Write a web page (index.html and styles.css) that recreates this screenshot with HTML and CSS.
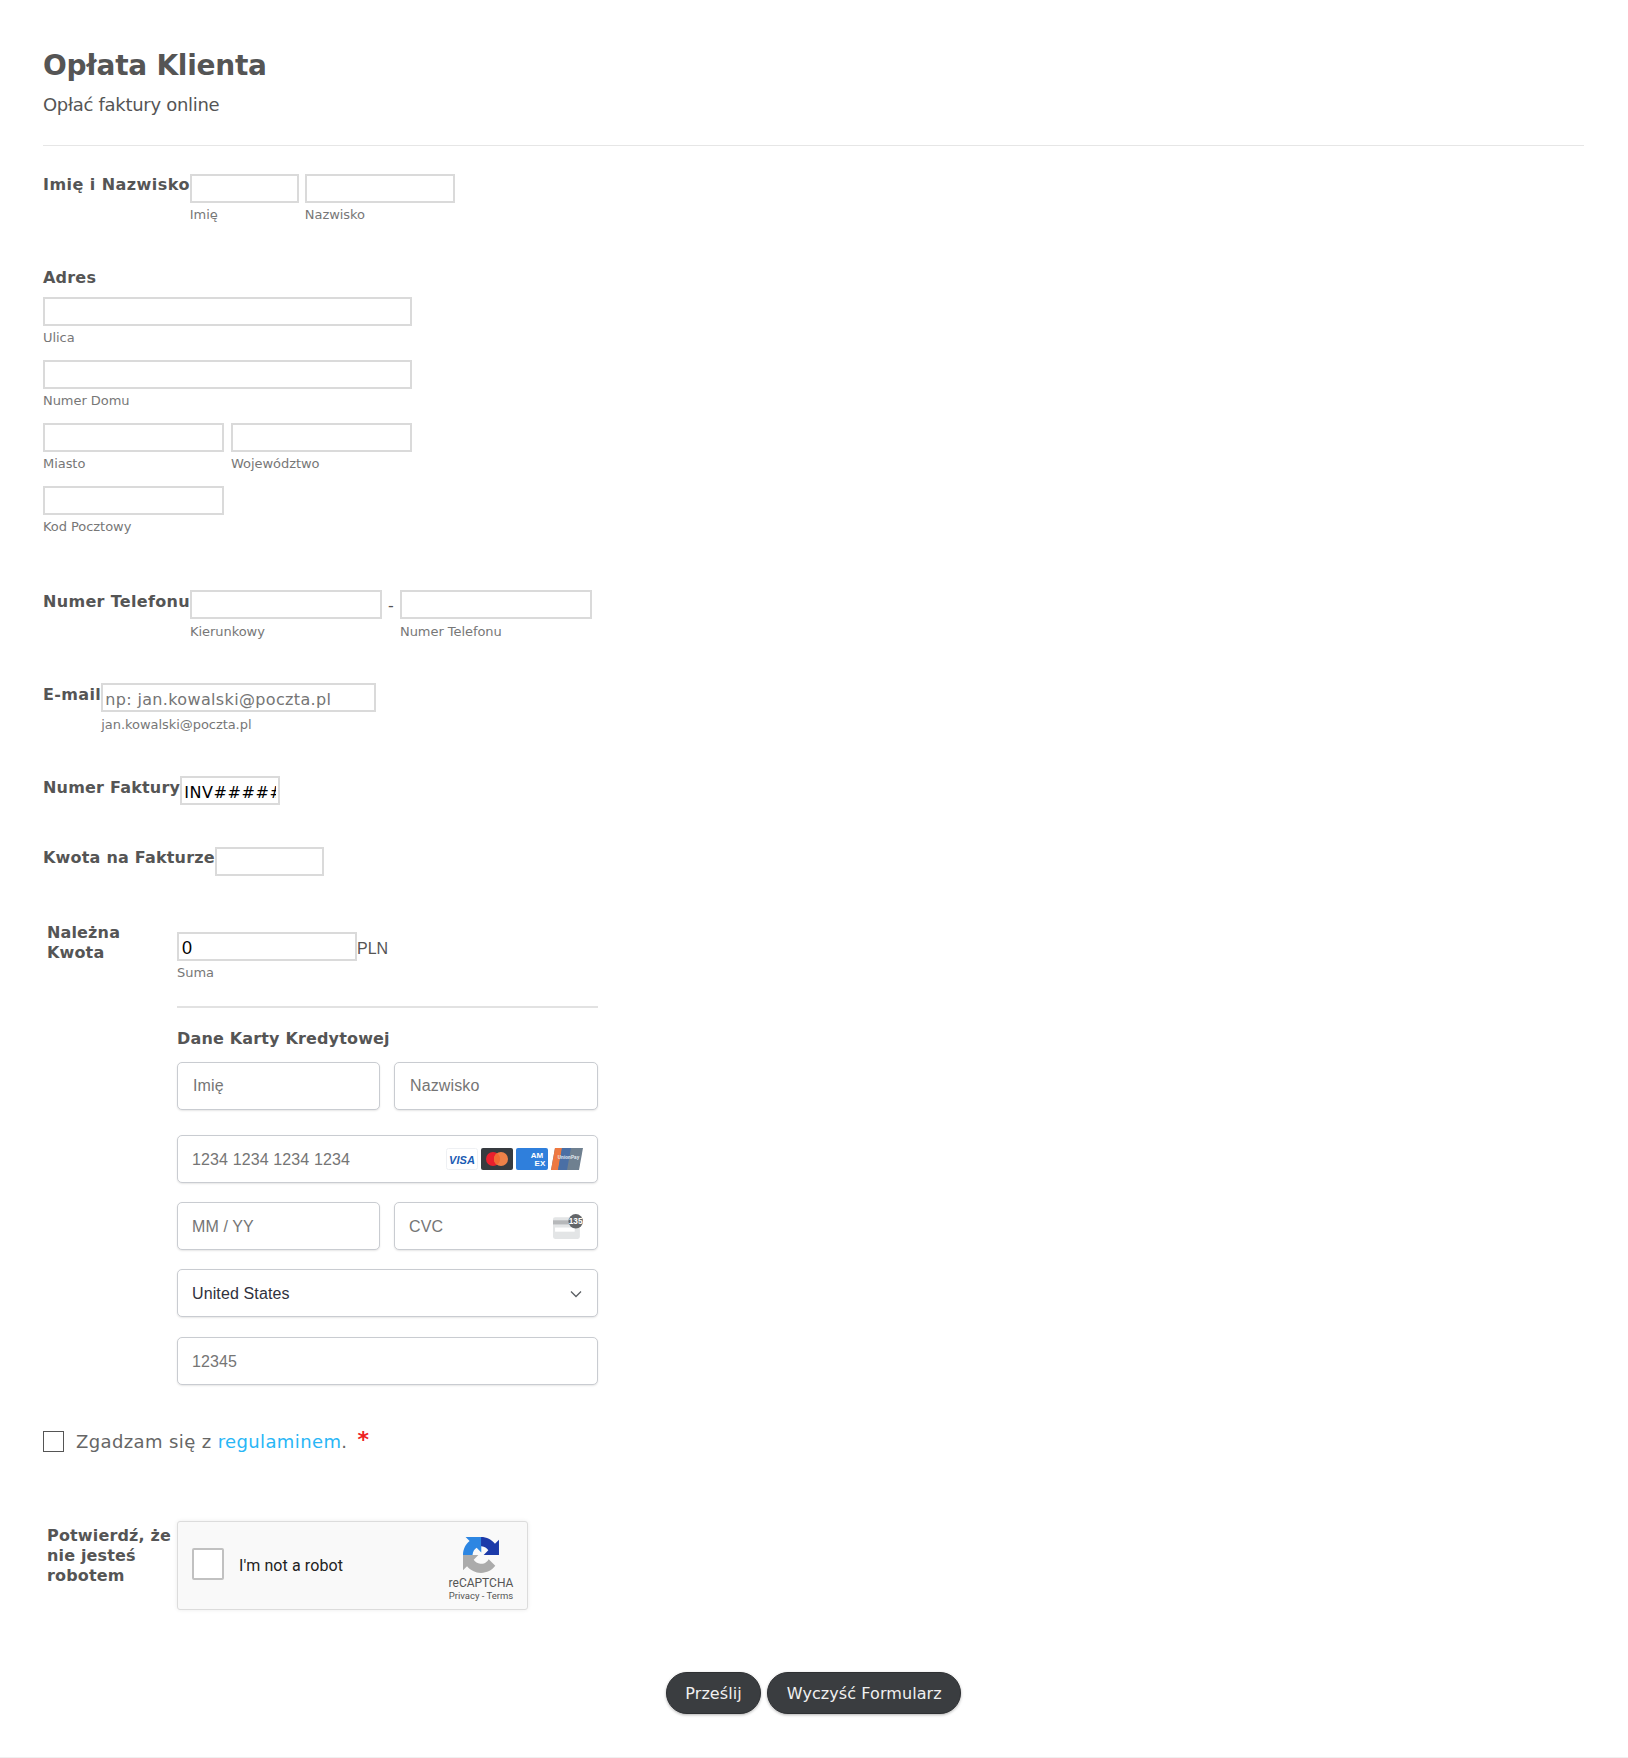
FILE: index.html
```html
<!DOCTYPE html>
<html lang="pl">
<head>
<meta charset="utf-8">
<title>Opłata Klienta</title>
<link rel="stylesheet" href="styles.css">
</head>
<body>
<form class="form">
  <header class="head">
    <h1 class="title">Opłata Klienta</h1>
    <p class="subtitle">Opłać faktury online</p>
  </header>

  <div class="field field-name">
    <span class="label">Imię i Nazwisko</span>
    <div class="inputs gap-6">
      <div class="sub"><input class="box w109" type="text"><span class="hint">Imię</span></div>
      <div class="sub"><input class="box w150" type="text"><span class="hint">Nazwisko</span></div>
    </div>
  </div>

  <div class="field-stack">
    <span class="label label-top">Adres</span>
    <div class="sub"><input class="box w369" type="text"><span class="hint">Ulica</span></div>
    <div class="sub mt14"><input class="box w369" type="text"><span class="hint">Numer Domu</span></div>
    <div class="inputs gap-7 mt14">
      <div class="sub"><input class="box w181" type="text"><span class="hint">Miasto</span></div>
      <div class="sub"><input class="box w181" type="text"><span class="hint">Województwo</span></div>
    </div>
    <div class="sub mt14"><input class="box w181" type="text"><span class="hint">Kod Pocztowy</span></div>
  </div>

  <div class="field field-phone">
    <span class="label">Numer Telefonu</span>
    <div class="inputs">
      <div class="sub"><input class="box w192" type="text"><span class="hint hint-low">Kierunkowy</span></div>
      <span class="dash">-</span>
      <div class="sub"><input class="box w192" type="text"><span class="hint hint-low">Numer Telefonu</span></div>
    </div>
  </div>

  <div class="field field-mail">
    <span class="label">E-mail</span>
    <div class="sub"><input class="box w275 spaced" type="text" placeholder="np: jan.kowalski@poczta.pl"><span class="hint hint-low">jan.kowalski@poczta.pl</span></div>
  </div>

  <div class="field field-invoice">
    <span class="label">Numer Faktury</span>
    <input class="box w100 pad-low" type="text" value="INV########">
  </div>

  <div class="field field-amount">
    <span class="label">Kwota na Fakturze</span>
    <input class="box w109" type="text">
  </div>

  <div class="field field-pay">
    <span class="label label-side">Należna Kwota</span>
    <div class="pay">
      <div class="total">
        <input class="box w180 arial" type="text" value="0"><span class="currency">PLN</span>
      </div>
      <span class="hint">Suma</span>
      <hr class="rule">
      <div class="card-title">Dane Karty Kredytowej</div>
      <div class="s-row s-row-first">
        <div class="s-box">Imię</div>
        <div class="s-box">Nazwisko</div>
      </div>
      <div class="s-box s-card">
        <span class="s-text">1234 1234 1234 1234</span>
        <span class="brands">
          <svg class="brand" viewBox="0 0 32 22"><rect x=".5" y=".5" width="31" height="21" rx="2" fill="#fff" stroke="#eef0f3"/><text class="visa" x="16" y="15.5" text-anchor="middle">VISA</text></svg>
          <svg class="brand" viewBox="0 0 32 22"><rect width="32" height="22" rx="2" fill="#363b40"/><circle cx="12" cy="11" r="7" fill="#ea1f2d"/><circle cx="20" cy="11" r="7" fill="#ee8148"/><path d="M16 5.2a7 7 0 0 1 0 11.6 7 7 0 0 1 0-11.6z" fill="#f26a33"/></svg>
          <svg class="brand" viewBox="0 0 32 22"><rect width="32" height="22" rx="2" fill="#2f7fdc"/><text class="amex" x="21" y="9.5" text-anchor="middle">AM</text><text class="amex" x="24" y="18" text-anchor="middle">EX</text></svg>
          <svg class="brand" viewBox="0 0 32 22"><path d="M4 0h28l-4 22H0z" fill="#6f8090"/><path d="M4 0h7L7 22H0z" fill="#ee7840"/><path d="M11 0h9l-4 22H7z" fill="#4a6fa5"/><text class="union" x="17.5" y="11" text-anchor="middle">UnionPay</text></svg>
        </span>
      </div>
      <div class="s-row">
        <div class="s-box"><span class="s-text">MM / YY</span></div>
        <div class="s-box s-card">
          <span class="s-text">CVC</span>
          <svg class="cvc" viewBox="0 0 30 24"><rect y="3" width="26" height="21" rx="2" fill="#e3e5e6"/><rect y="6" width="26" height="4" fill="#b6b8ba"/><rect x="2" y="13" width="19" height="4" fill="#fff"/><circle cx="22" cy="7" r="7" fill="#636669"/><text class="cvc-num" x="22" y="9.8" text-anchor="middle">135</text></svg>
        </div>
      </div>
      <div class="s-box s-card s-country">
        <span class="s-text s-value">United States</span>
        <svg class="chev" viewBox="0 0 12 8"><path d="M1 1.5l5 5 5-5" fill="none" stroke="#5b5f63" stroke-width="1.3"/></svg>
      </div>
      <div class="s-box"><span class="s-text">12345</span></div>
    </div>
  </div>

  <div class="terms">
    <span class="check"></span>
    <span class="terms-text">Zgadzam się z <a class="link" href="#">regulaminem</a>.</span>
    <span class="star">*</span>
  </div>

  <div class="field field-captcha">
    <span class="label label-side label-cap">Potwierdź, że nie jesteś robotem</span>
    <div class="captcha">
      <span class="cap-box"></span>
      <span class="cap-text">I'm not a robot</span>
      <div class="cap-brand">
        <svg class="cap-logo" viewBox="0 0 64 64">
          <path fill="#ababab" d="M.001 32.045l.033 1.37v25.898l7.16-7.16c5.86 7.173 14.774 11.754 24.76 11.754 10.4 0 19.622-4.96 25.458-12.64L45.676 39.407a15.55 15.55 0 0 1-4.754 5.334c-2.05 1.6-4.952 2.906-8.968 2.906-.485 0-.86-.057-1.135-.163-4.976-.393-9.288-3.14-11.828-7.124l8.307-8.307-26.3-.004"/>
          <path fill="#2d86e2" d="M31.862.094l-1.37.033H4.594l7.16 7.16C4.58 13.147 0 22.06 0 32.046h16.923c0-.485.057-.86.163-1.135.393-4.976 3.14-9.288 7.124-11.828l8.307 8.307.004-26.3"/>
          <path fill="#1c3aa9" d="M64 31.955l-.033-1.37V4.687l-7.16 7.16C50.948 4.674 42.033.093 32.05.093v16.165c.485 0 .86.057 1.135.163 4.976.393 9.288 3.14 11.828 7.124l-8.307 8.307 26.3.004"/>
        </svg>
        <span class="cap-name">reCAPTCHA</span>
        <span class="cap-links">Privacy - Terms</span>
      </div>
    </div>
  </div>

  <div class="actions">
    <button class="btn" type="button">Prześlij</button>
    <button class="btn" type="button">Wyczyść Formularz</button>
  </div>
</form>
</body>
</html>
```
FILE: styles.css
```css
* { box-sizing: border-box; }
html, body { margin: 0; padding: 0; background: #fff; }
body { height: 1758px; overflow: hidden; }
.form {
  font-family: "DejaVu Sans", sans-serif;
  color: #555;
  padding: 0 44px 0 43px;
  height: 1758px;
  border-bottom: 1px solid #f0f0f0;
}
.head { padding-top: 48px; height: 146px; border-bottom: 1px solid #e6e6e6; }
.title { margin: 0; font-size: 28px; line-height: 36px; font-weight: 700; letter-spacing: -.25px; color: #555; }
.subtitle { margin: 9px 0 0; font-size: 18px; line-height: 24px; letter-spacing: -.3px; color: #555; }

.field { display: flex; align-items: flex-start; }
.inputs { display: flex; align-items: flex-start; }
.gap-6 { gap: 6px; }
.gap-7 { gap: 7px; }
.mt14 { margin-top: 14px; }
.sub { display: flex; flex-direction: column; align-items: flex-start; }
.label { padding-top: 1px; font-size: 16px; line-height: 20px; font-weight: 700; letter-spacing: .3px; color: #555; white-space: nowrap; }
.label-top { display: block; margin-bottom: 9px; letter-spacing: .2px; }
.label-side { white-space: normal; width: 134px; padding-left: 4px; flex: none; letter-spacing: .15px; }

.box {
  display: block;
  height: 29px;
  margin: 0;
  padding: 2px 3px;
  border: 2px solid #dadada;
  border-radius: 0;
  background: #fff;
  font-family: "DejaVu Sans", sans-serif;
  font-size: 16px;
  color: #000;
  outline: none;
}
.box::placeholder { color: #757575; opacity: 1; }
.spaced { padding: 4px 3px 0 2px; letter-spacing: .35px; }
.pad-low { padding: 4px 2px 0; letter-spacing: .6px; }
.w100 { width: 100px; }
.w109 { width: 109px; }
.w150 { width: 150px; }
.w180 { width: 180px; }
.w181 { width: 181px; }
.w192 { width: 192px; }
.w275 { width: 275px; }
.w369 { width: 369px; }
.arial { padding: 4px 3px 0 3px; font-family: "Liberation Sans", sans-serif; font-size: 18px; }
.hint { display: block; margin-top: 4px; font-size: 13px; line-height: 16px; letter-spacing: -.05px; color: #777; white-space: nowrap; }
.hint-low { margin-top: 5px; line-height: 15px; }
.dash { width: 18px; text-align: center; font-size: 16px; line-height: 31px; color: #555; }

.field-name { margin-top: 28px; }
.field-name .label { letter-spacing: .45px; }
.field-stack { margin-top: 44px; }
.field-phone { margin-top: 55px; }
.field-phone .label { padding-top: 2px; letter-spacing: .32px; }
.field-mail { margin-top: 44px; }
.field-mail .label { padding-top: 2px; letter-spacing: .37px; }
.field-invoice { margin-top: 44px; }
.field-invoice .label { padding-top: 2px; letter-spacing: .2px; }
.field-amount { margin-top: 42px; }
.field-amount .label { letter-spacing: .2px; }
.field-pay { margin-top: 46px; }
.field-captcha { margin-top: 69px; }

.pay { width: 421px; padding-top: 10px; }
.total { display: flex; align-items: center; }
.currency { padding-top: 4px; font-family: "Liberation Sans", sans-serif; font-size: 16px; color: #555; }
.rule { height: 2px; margin: 25px 0 0; border: 0; background: #e2e2e2; }
.card-title { margin: 21px 0 13px; font-size: 16px; line-height: 20px; font-weight: 700; letter-spacing: .16px; color: #555; }

.s-row { display: grid; grid-template-columns: 203px 204px; gap: 14px; margin-bottom: 19px; }
.s-row-first { margin-bottom: 25px; }
.s-box {
  height: 48px;
  padding: 0 14px;
  display: flex;
  align-items: center;
  border: 1px solid #c9ccd1;
  border-radius: 5px;
  background: #fff;
  box-shadow: 0 1px 2px rgba(0, 0, 0, .1);
  font-family: "Liberation Sans", sans-serif;
  font-size: 16px;
  letter-spacing: .12px;
  color: #757575;
}
.s-row-first .s-box { padding-left: 15px; }
.s-text { padding-top: 2px; }
.s-card { justify-content: space-between; }
.pay > .s-card { margin-bottom: 19px; }
.pay > .s-country { margin-bottom: 20px; }
.s-value { color: #30313d; }
.brands { display: flex; gap: 3px; }
.brand { display: block; width: 32px; height: 22px; }
.visa { font: italic 700 11px "Liberation Sans", sans-serif; fill: #1a5bb3; }
.amex { font: 700 8px "Liberation Sans", sans-serif; fill: #fff; }
.union { font: 700 4.5px "Liberation Sans", sans-serif; fill: #e8edf3; }
.cvc { display: block; width: 31px; height: 25px; margin: 0 -1px 0 0; }
.cvc-num { font: 700 8px "Liberation Sans", sans-serif; fill: #fff; }
.chev { display: block; width: 12px; height: 8px; margin: 2px 1px 0 0; }

.terms { display: flex; align-items: flex-start; height: 21px; margin-top: 46px; }
.check { flex: none; width: 21px; height: 21px; border: 1px solid #555; background: #fff; }
.terms-text { margin-left: 12px; font-size: 18px; line-height: 21px; letter-spacing: .38px; color: #666; }
.link { color: #29b6f6; text-decoration: none; }
.star { margin: -3px 0 0 10px; font-size: 22px; line-height: 24px; font-weight: 700; color: #ee2222; }

.label-cap { margin-top: 4px; }
.captcha {
  display: flex;
  align-items: center;
  width: 351px;
  height: 89px;
  padding-left: 14px;
  border: 1px solid #dcdcdc;
  border-radius: 3px;
  background: #f9f9f9;
  box-shadow: 0 0 4px rgba(0, 0, 0, .08);
  font-family: Roboto, sans-serif;
}
.cap-box { flex: none; width: 32px; height: 32px; margin-bottom: 3px; border: 2px solid #c1c1c1; border-radius: 2px; background: #fff; }
.cap-text { margin-left: 15px; font-size: 16px; letter-spacing: .1px; color: #222; }
.cap-brand { display: flex; flex-direction: column; align-items: center; margin-left: auto; width: 70px; margin-right: 11px; padding-top: 7px; }
.cap-logo { display: block; width: 36px; height: 36px; }
.cap-name { margin-top: 4px; font-size: 12px; line-height: 13px; color: #555; }
.cap-links { font-size: 9.5px; line-height: 12px; color: #555; }

.actions { display: flex; justify-content: center; gap: 6px; margin-top: 62px; }
.btn {
  height: 42px;
  padding: 0 18.5px;
  border: 1px solid #2e3033;
  border-radius: 21px;
  background: #3a3d40;
  box-shadow: 0 1px 3px rgba(0, 0, 0, .3);
  font-family: "DejaVu Sans", sans-serif;
  font-size: 16px;
  letter-spacing: .08px;
  color: #f0f0f0;
}
```
